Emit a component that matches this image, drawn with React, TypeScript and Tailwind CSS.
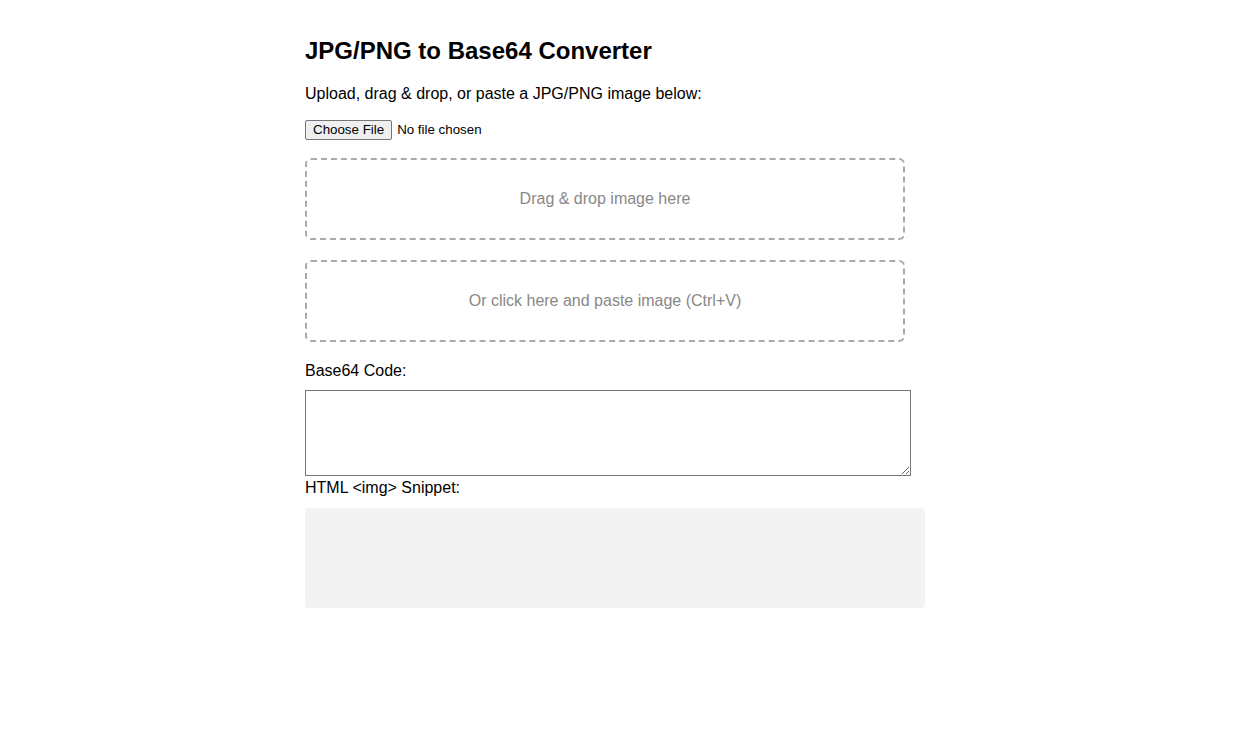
import { useState } from "react";

export default function App() {
  const [code, setCode] = useState("");

  return (
    <div className="min-h-screen bg-white font-['Liberation_Sans',Arial,sans-serif] text-black">
      <div className="mx-auto flex w-[627px] flex-col pr-[7px] pt-[37px]">
        <h2 className="text-[24px] leading-[28px] font-bold">JPG/PNG to Base64 Converter</h2>

        <p className="mt-[20px] text-[16px] leading-[18px]">
          Upload, drag &amp; drop, or paste a JPG/PNG image below:
        </p>

        <div className="mt-[17px] flex items-center text-[13.33px] leading-[16px]">
          <button
            type="button"
            className="h-[20px] rounded-[2px] border border-[#767676] bg-[#efefef] px-[7px] text-[13.33px] leading-[16px]"
          >
            Choose File
          </button>
          <span className="ml-[5px]">No file chosen</span>
        </div>

        <div className="mt-[18px] flex h-[82px] w-[600px] items-center justify-center rounded-[6px] border-2 border-dashed border-[#aaaaaa] text-[16px] text-[#888888]">
          Drag &amp; drop image here
        </div>

        <div
          tabIndex={0}
          className="mt-[20px] flex h-[82px] w-[600px] items-center justify-center rounded-[6px] border-2 border-dashed border-[#aaaaaa] text-[16px] text-[#888888] outline-none"
        >
          Or click here and paste image (Ctrl+V)
        </div>

        <label className="mt-[20px] text-[16px] leading-[18px]">Base64 Code:</label>
        <textarea
          value={code}
          onChange={(e) => setCode(e.target.value)}
          className="mt-[10px] block h-[86px] w-[606px] resize border border-[#767676] p-[2px] font-['Liberation_Mono',monospace] text-[13px]"
        />

        <label className="mt-[3px] text-[16px] leading-[18px]">HTML &lt;img&gt; Snippet:</label>
        <pre className="mt-[11px] h-[100px] w-[620px] rounded-[4px] bg-[#f3f3f3] p-[10px] font-['Liberation_Mono',monospace] text-[13px] whitespace-pre-wrap"></pre>
      </div>
    </div>
  );
}
